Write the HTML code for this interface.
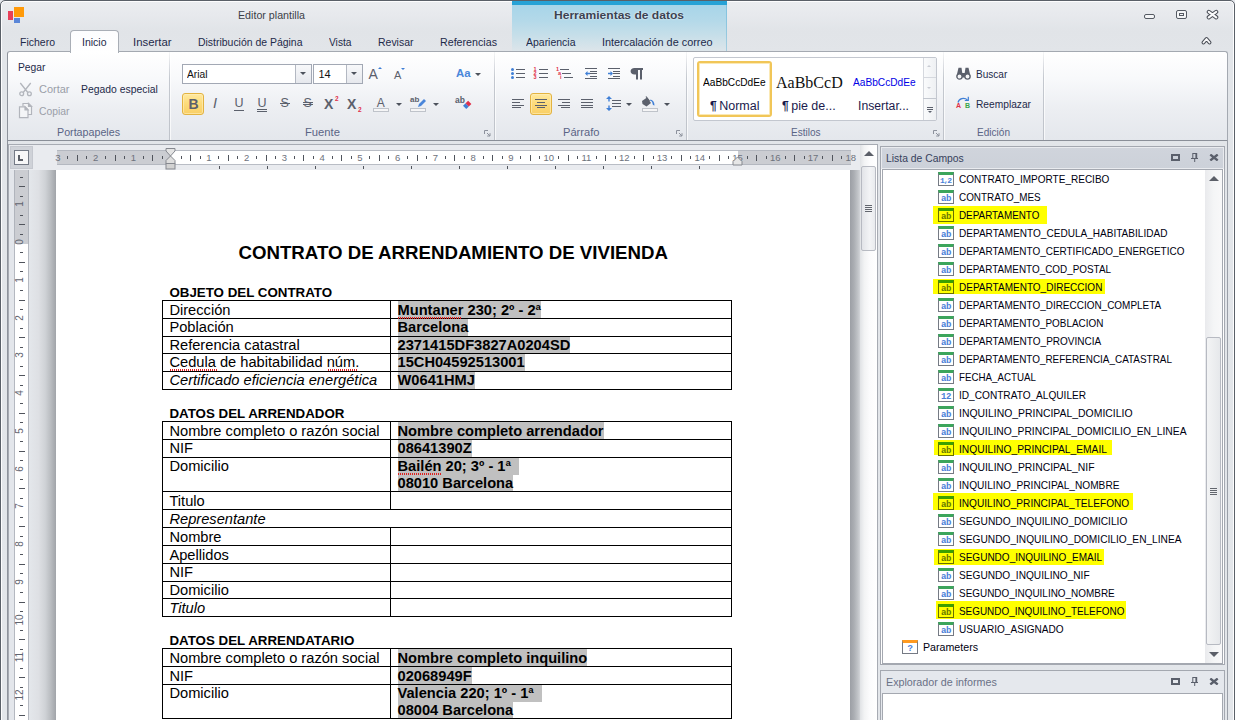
<!DOCTYPE html>
<html><head><meta charset="utf-8">
<style>
*{box-sizing:border-box;margin:0;padding:0}
html,body{width:1235px;height:720px;overflow:hidden}
body{position:relative;font-family:"Liberation Sans",sans-serif;font-size:11px;color:#1e2a4a;background:#e4e7ec}
.a{position:absolute}
.t{position:absolute;white-space:nowrap;line-height:14px;height:14px;transform-origin:0 50%}
#win{left:0;top:0;width:1235px;height:730px;background:linear-gradient(#ebedf0 0,#e7e9ed 14px,#e1e4e8 30px,#e2e5e9 52px,#e3e6ea 100%);border:1px solid #5a6068;border-radius:5px 5px 0 0;box-shadow:inset 0 0 0 1px #fdfdfe}
/* ribbon */
#ribbon{left:7px;top:51px;width:1221px;height:90px;background:linear-gradient(#ffffff 0,#f8f9fb 30%,#eceef2 65%,#e4e7ec 100%);border:1px solid #a4a9b1;border-left-color:#8e939c;border-bottom:1px solid #8a8f98;border-radius:3px 3px 0 0}
.gsep{position:absolute;top:52px;width:1px;height:88px;background:linear-gradient(rgba(192,196,203,.15),#c4c8cf 30%,#bfc3ca 100%);box-shadow:1px 0 0 rgba(255,255,255,.7)}
.glab{position:absolute;top:125px;height:14px;line-height:14px;color:#5a6485;text-align:center;white-space:nowrap}
.dis{color:#9a9ea8}

.ic{position:absolute;white-space:nowrap;color:#5b606c;font-weight:bold;line-height:1;transform-origin:0 50%}
.arr{position:absolute;width:0;height:0;border-left:3px solid transparent;border-right:3px solid transparent;border-top:3px solid #4d525c}
.combo{position:absolute;height:20px;background:#fff;border:1px solid #a2a8b4}
.cbtn{position:absolute;top:0;right:0;width:16px;height:18px;border-left:1px solid #b3b8c2;background:linear-gradient(#f7f8fa,#e6e8ed)}
.sel{position:absolute;border:1px solid #e3b341;border-radius:3px;background:linear-gradient(#ffe9a0 0,#fddc7c 45%,#f9cf66 100%);box-shadow:inset 0 0 0 1px rgba(255,240,190,.6)}

.fi{position:absolute;left:938px;width:16px;height:14px;border:1px solid #757a84;border-top:3px solid #3ca55c;background:#fff;color:#4a80d8;font-family:"Liberation Mono",monospace;font-weight:bold;font-size:9px;line-height:10px;padding-top:1px;text-align:center;letter-spacing:-0.500px;overflow:hidden}
.fi.y{background:#ffff00;color:#667800;border-color:#6a7000;border-top-color:#3ca000}
.tr{position:absolute;left:958.500px;white-space:nowrap;line-height:14px;height:14px;color:#000010;transform-origin:0 50%}
.yh{position:absolute;background:#ffff00}
/* doc */

#docbg{left:8px;top:144px;width:870px;height:576px;background:#e3e6eb;border:1px solid #a7abb3;border-bottom:none}
.rn{position:absolute;top:150.500px;width:20px;text-align:center;font-size:9.500px;line-height:14px;color:#6d727c}
.tk{position:absolute;width:1px;background:#50545c}
.dt{position:absolute;white-space:nowrap;color:#000;font-size:14.670px;line-height:17px;height:17px}
.dt b{background:#c0c0c0;padding:1px 0}
.hl{position:absolute;background:#000}
.sq{position:absolute;height:2px;background:repeating-linear-gradient(90deg,#e02020 0,#e02020 1px,transparent 1px,transparent 2px)}

</style></head><body>
<div id="win" class="a"></div>

<!-- TITLE BAR -->
<div class="a" style="left:8px;top:11px;width:5px;height:9px;background:#e8405a"></div>
<div class="a" style="left:14px;top:7px;width:10px;height:10px;background:#ff9a0a"></div>
<div class="a" style="left:14px;top:18px;width:6px;height:5px;background:#5a86d8"></div>
<div class="t" style="transform:scaleX(0.9697);left:238px;top:8px;font-size:11px;color:#3c3f48">Editor plantilla</div>
<!-- contextual tab header -->
<div class="a" style="left:512px;top:1px;width:215px;height:50px;background:linear-gradient(#a4d4e9 0,#b4d9e9 40%,#c7dfe9 70%,#dde5ea 100%);border-right:1px solid rgba(60,160,205,.35)"></div>
<div class="a" style="left:512px;top:1px;width:215px;height:4px;background:#27a2d6"></div>
<div class="t" style="transform:scaleX(1.0960);left:554px;top:8px;font-weight:bold;color:#3b4252;text-shadow:0 0 2px #fff">Herramientas de datos</div>
<!-- window buttons -->
<div class="a" style="left:1144px;top:14px;width:11px;height:5px;border:1.5px solid #555a63;border-radius:2px;background:#f4f5f7"></div>
<div class="a" style="left:1176px;top:10px;width:11px;height:9px;border:1.5px solid #555a63;border-radius:2px;background:#f4f5f7"></div>
<div class="a" style="left:1179px;top:13px;width:5px;height:3px;border:1px solid #555a63"></div>
<svg class="a" style="left:1206px;top:9px" width="13" height="11" viewBox="0 0 13 11" fill="none" stroke-linecap="round" stroke-linejoin="round"><path d="M2.800 2.900L10.200 8.300M10.200 2.900L2.800 8.300" stroke="#4a4e57" stroke-width="4.200"/><path d="M2.800 2.900L10.200 8.300M10.200 2.900L2.800 8.300" stroke="#fafafb" stroke-width="2.200"/></svg>
<svg class="a" style="left:1201px;top:36px" width="11" height="9" viewBox="0 0 11 9" fill="none" stroke-linecap="round" stroke-linejoin="round"><path d="M2.500 6.500L5.500 3 8.500 6.500" stroke="#4a4e57" stroke-width="3.800"/><path d="M2.500 6.500L5.500 3 8.500 6.500" stroke="#fafafb" stroke-width="1.800"/></svg>
<!-- TABS -->
<div class="a" style="left:70px;top:30px;width:49px;height:23px;background:linear-gradient(#fdfdfe,#ffffff);border:1px solid #a9aeb6;border-bottom:none;border-radius:4px 4px 0 0;z-index:3"></div>
<div class="t" style="transform:scaleX(0.9540);left:20px;top:35px;z-index:4">Fichero</div>
<div class="t" style="transform:scaleX(0.9538);left:81.500px;top:35px;z-index:4">Inicio</div>
<div class="t" style="transform:scaleX(1.0323);left:132.500px;top:35px;z-index:4">Insertar</div>
<div class="t" style="transform:scaleX(0.9493);left:197.500px;top:35px;z-index:4">Distribución de Página</div>
<div class="t" style="transform:scaleX(0.9272);left:328.700px;top:35px;z-index:4">Vista</div>
<div class="t" style="transform:scaleX(0.9518);left:377.500px;top:35px;z-index:4">Revisar</div>
<div class="t" style="transform:scaleX(0.9710);left:439.500px;top:35px;z-index:4">Referencias</div>
<div class="t" style="transform:scaleX(0.9522);left:525.800px;top:35px;z-index:4">Apariencia</div>
<div class="t" style="transform:scaleX(0.9874);left:601.600px;top:35px;z-index:4">Intercalación de correo</div>

<!-- RIBBON -->
<div id="ribbon" class="a"></div>
<div class="a" style="left:7px;top:141px;width:1px;height:580px;background:#8e939c"></div>
<!-- Portapapeles -->
<div class="t" style="transform:scaleX(0.9367);left:17.500px;top:60px">Pegar</div>
<svg class="a" style="left:18px;top:82px" width="15" height="15" viewBox="0 0 15 15" fill="none" stroke="#b2b5bc" stroke-width="1.300"><path d="M2.300 1L9.800 10.500M12.700 1L5.200 10.500"/><circle cx="3.700" cy="11.700" r="1.900"/><circle cx="11.400" cy="11.700" r="1.900"/></svg>
<div class="t dis" style="transform:scaleX(0.9980);left:38.700px;top:82px">Cortar</div>
<div class="t" style="transform:scaleX(0.9441);left:80.700px;top:82px">Pegado especial</div>
<svg class="a" style="left:18px;top:102px" width="15" height="17" viewBox="0 0 15 17" fill="#f4f5f7" stroke="#b2b5bc" stroke-width="1.200"><path d="M5 4.500V1.500H10.500L13.500 4.500V12.500H10"/><path d="M10.500 1.500V4.500H13.500Z" fill="#b2b5bc"/><path d="M1.500 4.800H7L10 7.800V15.700H1.500Z"/><path d="M7 4.800V7.800H10Z" fill="#b2b5bc"/></svg>
<div class="t dis" style="transform:scaleX(0.9412);left:38.700px;top:104px">Copiar</div>
<div class="t" style="transform:scaleX(0.9718);left:56.500px;top:125px;color:#5a6485">Portapapeles</div>
<div class="gsep" style="left:169px"></div>
<!-- Fuente -->
<div class="combo" style="left:182px;top:64px;width:130px"><div class="cbtn"></div></div>
<div class="arr" style="left:300px;top:72px"></div>
<div class="t" style="transform:scaleX(0.9312);left:187px;top:67px;color:#111">Arial</div>
<div class="combo" style="left:313px;top:64px;width:50px"><div class="cbtn"></div></div>
<div class="arr" style="left:351px;top:72px"></div>
<div class="t" style="left:318.500px;top:67px;color:#111">14</div>
<div class="ic" style="left:368.500px;top:67px;font-size:14px;font-weight:normal">A</div>
<div class="a" style="left:378px;top:67px;width:0;height:0;border-left:2.500px solid transparent;border-right:2.500px solid transparent;border-bottom:2.500px solid #3f7fd6"></div>
<div class="ic" style="left:394px;top:70px;font-size:11px;font-weight:normal">A</div>
<div class="a" style="left:400.500px;top:67.500px;width:0;height:0;border-left:2.500px solid transparent;border-right:2.500px solid transparent;border-top:2.500px solid #3f7fd6"></div>
<div class="ic" style="transform:scaleX(0.9862);left:456px;top:68px;font-size:11.500px;color:#4a86da">Aa</div>
<div class="arr" style="left:474.500px;top:73px"></div>
<div class="sel" style="left:182px;top:93px;width:22px;height:22px"></div>
<div class="ic" style="left:188.500px;top:96.500px;font-size:14px">B</div>
<div class="ic" style="left:213px;top:96px;font-size:14.500px;font-style:italic;font-weight:normal">I</div>
<div class="ic" style="left:234.500px;top:97px;font-size:12.500px;font-weight:normal">U</div>
<div class="a" style="left:234px;top:110px;width:10px;height:1px;background:#5b606c"></div>
<div class="ic" style="left:257.500px;top:97px;font-size:12.500px;font-weight:normal">U</div>
<div class="a" style="left:257px;top:109px;width:10px;height:3px;border-top:1px solid #5b606c;border-bottom:1px solid #5b606c"></div>
<div class="ic" style="left:280.500px;top:97px;font-size:12.500px;font-weight:normal">S</div>
<div class="a" style="left:279.500px;top:103px;width:10px;height:1px;background:#5b606c"></div>
<div class="ic" style="left:303.500px;top:97px;font-size:12.500px;font-weight:normal">S</div>
<div class="a" style="left:302.500px;top:102px;width:10px;height:3px;border-top:1px solid #5b606c;border-bottom:1px solid #5b606c"></div>
<div class="ic" style="left:324px;top:96.500px;font-size:14px">X</div>
<div class="ic" style="left:335px;top:96px;font-size:6.500px;color:#e0304a">2</div>
<div class="ic" style="left:347px;top:96.500px;font-size:14px">X</div>
<div class="ic" style="left:358px;top:106.500px;font-size:6.500px;color:#e0304a">2</div>
<div class="ic" style="left:376.800px;top:96.500px;font-size:12px;font-weight:normal">A</div>
<div class="a" style="left:373px;top:108px;width:16px;height:4px;border:1px solid #bfc3ca;background:#f5f5f6"></div>
<div class="arr" style="left:395.500px;top:103px"></div>
<div class="ic" style="left:410px;top:95.500px;font-size:8px">ab</div>
<svg class="a" style="left:417px;top:98px" width="10" height="10" viewBox="0 0 10 10"><path d="M1 9L2 6 7 1 9 3 4 8Z" fill="#4a86da"/></svg>
<div class="a" style="left:410px;top:108px;width:16px;height:4px;border:1px solid #bfc3ca;background:#f5f5f6"></div>
<div class="arr" style="left:432.500px;top:103px"></div>
<div class="ic" style="left:455px;top:96px;font-size:8.500px">ab</div>
<svg class="a" style="left:461px;top:99px" width="12" height="12" viewBox="0 0 12 12"><g transform="translate(6.200 5.800) rotate(-45)"><rect x="-3.600" y="-2.300" width="3.600" height="4.600" fill="#3f7fd6"/><rect x="0" y="-2.300" width="3.600" height="4.600" fill="#e0304a"/></g></svg>
<div class="t" style="transform:scaleX(1.0219);left:305px;top:125px;color:#5a6485">Fuente</div>
<svg class="a" style="left:483.500px;top:130px" width="7" height="7" viewBox="0 0 7 7" fill="none" stroke="#8c919c" stroke-width="1"><path d="M0.500 4V0.500H4"/><path d="M3 3L6 6M6 3.200V6H3.200"/></svg>
<div class="gsep" style="left:494px"></div>

<!-- Parrafo -->
<div class="a" style="left:510.500px;top:68px;width:3px;height:3px;border-radius:50%;background:#3f7fd6"></div>
<div class="a" style="left:516px;top:69px;width:9px;height:1px;background:#5b606c"></div>
<div class="a" style="left:510.500px;top:72px;width:3px;height:3px;border-radius:50%;background:#3f7fd6"></div>
<div class="a" style="left:516px;top:73px;width:9px;height:1px;background:#5b606c"></div>
<div class="a" style="left:510.500px;top:76px;width:3px;height:3px;border-radius:50%;background:#3f7fd6"></div>
<div class="a" style="left:516px;top:77px;width:9px;height:1px;background:#5b606c"></div>
<div class="ic" style="left:533.500px;top:66.5px;font-size:5.500px;color:#e0304a">1</div>
<div class="a" style="left:539px;top:69px;width:9px;height:1px;background:#5b606c"></div>
<div class="ic" style="left:533.500px;top:70.5px;font-size:5.500px;color:#e0304a">2</div>
<div class="a" style="left:539px;top:73px;width:9px;height:1px;background:#5b606c"></div>
<div class="ic" style="left:533.500px;top:74.5px;font-size:5.500px;color:#e0304a">3</div>
<div class="a" style="left:539px;top:77px;width:9px;height:1px;background:#5b606c"></div>
<div class="ic" style="left:556px;top:66.5px;font-size:5.500px;color:#e0304a">1</div>
<div class="a" style="left:559.5px;top:69px;width:9px;height:1px;background:#5b606c"></div>
<div class="ic" style="left:558px;top:70.5px;font-size:5.500px;color:#e0304a">a</div>
<div class="a" style="left:561.5px;top:73px;width:9px;height:1px;background:#5b606c"></div>
<div class="ic" style="left:560px;top:74.5px;font-size:5.500px;color:#e0304a">i</div>
<div class="a" style="left:563.5px;top:77px;width:9px;height:1px;background:#5b606c"></div>
<div class="a" style="left:585px;top:68.0px;width:12px;height:1px;background:#5b606c"></div>
<div class="a" style="left:590px;top:70.5px;width:7px;height:1px;background:#5b606c"></div>
<div class="a" style="left:590px;top:73.0px;width:7px;height:1px;background:#5b606c"></div>
<div class="a" style="left:590px;top:75.5px;width:7px;height:1px;background:#5b606c"></div>
<div class="a" style="left:585px;top:78.0px;width:12px;height:1px;background:#5b606c"></div>
<svg class="a" style="left:585px;top:70.500px" width="5" height="5" viewBox="0 0 5 5"><path d="M0 2.500L2.500 0V1.800H5V3.200H2.500V5Z" fill="#3f7fd6"/></svg>
<div class="a" style="left:607.5px;top:68.0px;width:12px;height:1px;background:#5b606c"></div>
<div class="a" style="left:612.5px;top:70.5px;width:7px;height:1px;background:#5b606c"></div>
<div class="a" style="left:612.5px;top:73.0px;width:7px;height:1px;background:#5b606c"></div>
<div class="a" style="left:612.5px;top:75.5px;width:7px;height:1px;background:#5b606c"></div>
<div class="a" style="left:607.5px;top:78.0px;width:12px;height:1px;background:#5b606c"></div>
<svg class="a" style="left:607.5px;top:70.500px" width="5" height="5" viewBox="0 0 5 5"><path d="M5 2.500L2.500 0V1.800H0V3.200H2.500V5Z" fill="#3f7fd6"/></svg>
<svg class="a" style="left:630px;top:68px" width="14" height="12" viewBox="0 0 14 12"><path d="M4.500 0H13V2H12V11.500H10V2H8V11.500H6V6.500H4.500C2 6.500 0.600 5 0.600 3.250C0.600 1.500 2 0 4.500 0Z" fill="#5b606c"/></svg>
<div class="a" style="left:512.0px;top:99.0px;width:12px;height:1px;background:#5b606c"></div>
<div class="a" style="left:512.0px;top:101.8px;width:8px;height:1px;background:#5b606c"></div>
<div class="a" style="left:512.0px;top:104.5px;width:12px;height:1px;background:#5b606c"></div>
<div class="a" style="left:512.0px;top:107.2px;width:9px;height:1px;background:#5b606c"></div>
<div class="sel" style="left:530px;top:93px;width:22px;height:22px"></div>
<div class="a" style="left:535.0px;top:99.0px;width:12px;height:1px;background:#5b606c"></div>
<div class="a" style="left:537.0px;top:101.8px;width:8px;height:1px;background:#5b606c"></div>
<div class="a" style="left:535.0px;top:104.5px;width:12px;height:1px;background:#5b606c"></div>
<div class="a" style="left:537.0px;top:107.2px;width:8px;height:1px;background:#5b606c"></div>
<div class="a" style="left:558.0px;top:99.0px;width:12px;height:1px;background:#5b606c"></div>
<div class="a" style="left:562.0px;top:101.8px;width:8px;height:1px;background:#5b606c"></div>
<div class="a" style="left:558.0px;top:104.5px;width:12px;height:1px;background:#5b606c"></div>
<div class="a" style="left:561.0px;top:107.2px;width:9px;height:1px;background:#5b606c"></div>
<div class="a" style="left:581.0px;top:99.0px;width:12px;height:1px;background:#5b606c"></div>
<div class="a" style="left:581.0px;top:101.8px;width:12px;height:1px;background:#5b606c"></div>
<div class="a" style="left:581.0px;top:104.5px;width:12px;height:1px;background:#5b606c"></div>
<div class="a" style="left:581.0px;top:107.2px;width:12px;height:1px;background:#5b606c"></div>
<svg class="a" style="left:605.500px;top:96px" width="6" height="15" viewBox="0 0 6 15"><path d="M3 0L6 3H3.700V5.500H2.300V3H0Z M3 15L6 12H3.700V9.500H2.300V12H0Z" fill="#3f7fd6"/></svg>
<div class="a" style="left:612.0px;top:99.5px;width:9px;height:1px;background:#5b606c"></div>
<div class="a" style="left:612.0px;top:102.9px;width:9px;height:1px;background:#5b606c"></div>
<div class="a" style="left:612.0px;top:106.3px;width:9px;height:1px;background:#5b606c"></div>
<div class="arr" style="left:625.500px;top:103px"></div>
<svg class="a" style="left:641px;top:96px" width="17" height="12" viewBox="0 0 17 12"><path d="M1 5L6 1.500 10 7 5.500 10.500 1.500 8Z" fill="#5b606c"/><path d="M5 0.500L8.500 5" stroke="#5b606c" stroke-width="1.200" fill="none"/><path d="M9.500 3.500C12 4 13.500 6 13.500 9.500C12.500 9.500 11.500 8.500 11.500 7.500C11.500 6 10.500 5 9 4.800Z" fill="#3f7fd6"/></svg>
<div class="a" style="left:641.500px;top:108px;width:16px;height:4px;border:1px solid #bfc3ca;background:#f5f5f6"></div>
<div class="arr" style="left:663.500px;top:103px"></div>
<div class="t" style="transform:scaleX(1.0117);left:563px;top:125px;color:#5a6485">Párrafo</div>
<svg class="a" style="left:675.500px;top:130px" width="7" height="7" viewBox="0 0 7 7" fill="none" stroke="#8c919c" stroke-width="1"><path d="M0.500 4V0.500H4"/><path d="M3 3L6 6M6 3.200V6H3.200"/></svg>
<div class="gsep" style="left:686px"></div>
<!-- Estilos -->
<div class="a" style="left:693px;top:57px;width:244px;height:64px;background:#fff;border:1px solid #c3c7cf;border-radius:2px"></div>
<div class="a" style="left:923px;top:58px;width:13px;height:62px;border-left:1px solid #d5d8de;background:linear-gradient(90deg,#fafbfc,#eef0f3)"></div>
<div class="a" style="left:923px;top:77px;width:13px;height:1px;background:#d5d8de"></div>
<div class="a" style="left:923px;top:98px;width:13px;height:1px;background:#c3c7cf"></div>
<div class="a" style="left:927px;top:65px;width:0;height:0;border-left:2.500px solid transparent;border-right:2.500px solid transparent;border-bottom:2.500px solid #c9ccd3"></div>
<div class="a" style="left:927px;top:87px;width:0;height:0;border-left:2.500px solid transparent;border-right:2.500px solid transparent;border-top:2.500px solid #c9ccd3"></div>
<div class="a" style="left:927px;top:106.500px;width:6px;height:1px;background:#5b606c"></div>
<div class="a" style="left:927px;top:108.500px;width:6px;height:1px;background:#5b606c"></div>
<div class="a" style="left:927.500px;top:110.500px;width:0;height:0;border-left:2.500px solid transparent;border-right:2.500px solid transparent;border-top:2.500px solid #5b606c"></div>
<div class="a" style="left:697px;top:61px;width:75px;height:56px;border:2px solid #f1c658;border-radius:3px;background:#fff;box-shadow:inset 0 0 0 1px #fbe9b4"></div>
<div class="t" style="transform:scaleX(0.9223);left:702.800px;top:75.400px;color:#000">AaBbCcDdEe</div>
<div class="t" style="transform:scaleX(1.0003);left:710px;top:97.500px;font-size:12.500px;line-height:16px;height:16px;color:#1b1b4d"><b style="font-size:12px">¶</b>&#8201;Normal</div>
<div class="t" style="transform:scaleX(0.9149);left:775.700px;top:72px;font-family:'Liberation Serif',serif;font-size:17.500px;line-height:20px;height:20px;color:#111">AaBbCcD</div>
<div class="t" style="transform:scaleX(1.0005);left:782px;top:97.500px;font-size:12.500px;line-height:16px;height:16px;color:#1b1b4d"><b style="font-size:12px">¶</b>&#8201;pie de...</div>
<div class="t" style="transform:scaleX(0.9223);left:853px;top:75.400px;color:#0000e6">AaBbCcDdEe</div>
<div class="t" style="transform:scaleX(0.9787);left:858.300px;top:97.500px;font-size:12.500px;line-height:16px;height:16px;color:#1b1b4d">Insertar...</div>
<div class="t" style="transform:scaleX(0.9103);left:790.500px;top:125px;color:#5a6485">Estilos</div>
<svg class="a" style="left:933px;top:130px" width="7" height="7" viewBox="0 0 7 7" fill="none" stroke="#8c919c" stroke-width="1"><path d="M0.500 4V0.500H4"/><path d="M3 3L6 6M6 3.200V6H3.200"/></svg>
<div class="gsep" style="left:943px"></div>
<!-- Edicion -->
<svg class="a" style="left:956px;top:67px" width="15" height="13" viewBox="0 0 15 13"><path d="M2.500 0.800H5.500L6.300 6H8.700L9.500 0.800H12.500L14.300 8.500V10.500H0.700V8.500Z" fill="#5b606c"/><circle cx="3.500" cy="9.500" r="2.600" fill="#f4f5f7" stroke="#5b606c" stroke-width="1.300"/><circle cx="11.500" cy="9.500" r="2.600" fill="#f4f5f7" stroke="#5b606c" stroke-width="1.300"/></svg>
<div class="t" style="transform:scaleX(0.9139);left:975.700px;top:66.500px">Buscar</div>
<div class="ic" style="left:956px;top:102px;font-size:7px;color:#e0304a">A</div>
<div class="ic" style="left:965px;top:102px;font-size:7px;color:#3aa54a">B</div>
<svg class="a" style="left:957px;top:96px" width="13" height="7" viewBox="0 0 13 7" fill="none" stroke="#3f7fd6" stroke-width="1.200"><path d="M1 6.500C2 2.500 7 1 10.500 4"/><path d="M11.300 0.800V4.500H7.800" /></svg>
<div class="t" style="transform:scaleX(0.9273);left:975.700px;top:96.700px">Reemplazar</div>
<div class="t" style="transform:scaleX(0.9147);left:977.400px;top:125px;color:#5a6485">Edición</div>
<div class="gsep" style="left:1043px"></div>

<!-- DOC AREA -->
<div id="docbg" class="a"></div>
<div class="a" style="left:9px;top:145px;width:868px;height:25px;background:#e9ebef"></div>
<div class="a" style="left:29px;top:170px;width:27px;height:550px;background:linear-gradient(90deg,#e4e7eb 0,#dee0e4 35%,#cfd2d6 60%,#babdc1 80%,#a1a4a9 100%)"></div>
<div class="a" style="left:56px;top:170px;width:794px;height:550px;background:#fff"></div>
<div class="a" style="left:850px;top:170px;width:10px;height:550px;background:linear-gradient(90deg,#9c9fa5 0,#abaeb3 40%,#c2c5c9 80%,#d2d4d8 100%)"></div>
<div class="a" style="left:10px;top:146px;width:23px;height:23px;background:#cfd2d8;border:1px solid #c5c8cf"></div>
<div class="a" style="left:14px;top:150px;width:15px;height:15px;background:#f7f7f8;border:1px solid #747a86"></div>
<div class="a" style="left:18px;top:155px;width:2px;height:6px;background:#5b5f68"></div><div class="a" style="left:18px;top:159px;width:5px;height:2px;background:#5b5f68"></div>
<div class="a" style="left:57px;top:150px;width:794px;height:15px;background:#fff;border-top:1px solid #b9bdc5;border-bottom:1px solid #b9bdc5"></div>
<div class="a" style="left:57px;top:150px;width:113.500px;height:15px;background:#cbcdd2;border-top:1px solid #b4b8c0;border-bottom:1px solid #b4b8c0"></div>
<div class="a" style="left:737.500px;top:150px;width:113.500px;height:15px;background:#cbcdd2;border-top:1px solid #b4b8c0;border-bottom:1px solid #b4b8c0"></div>
<div class="rn" style="left:47.95px">3</div>
<div class="tk" style="left:67px;top:156px;height:3px"></div>
<div class="tk" style="left:77px;top:155px;height:6px"></div>
<div class="tk" style="left:86px;top:156px;height:3px"></div>
<div class="rn" style="left:85.70px">2</div>
<div class="tk" style="left:105px;top:156px;height:3px"></div>
<div class="tk" style="left:115px;top:155px;height:6px"></div>
<div class="tk" style="left:124px;top:156px;height:3px"></div>
<div class="rn" style="left:123.45px">1</div>
<div class="tk" style="left:143px;top:156px;height:3px"></div>
<div class="tk" style="left:152px;top:155px;height:6px"></div>
<div class="tk" style="left:162px;top:156px;height:3px"></div>
<div class="tk" style="left:181px;top:156px;height:3px"></div>
<div class="tk" style="left:190px;top:155px;height:6px"></div>
<div class="tk" style="left:200px;top:156px;height:3px"></div>
<div class="rn" style="left:198.95px">1</div>
<div class="tk" style="left:218px;top:156px;height:3px"></div>
<div class="tk" style="left:228px;top:155px;height:6px"></div>
<div class="tk" style="left:237px;top:156px;height:3px"></div>
<div class="rn" style="left:236.70px">2</div>
<div class="tk" style="left:256px;top:156px;height:3px"></div>
<div class="tk" style="left:266px;top:155px;height:6px"></div>
<div class="tk" style="left:275px;top:156px;height:3px"></div>
<div class="rn" style="left:274.45px">3</div>
<div class="tk" style="left:294px;top:156px;height:3px"></div>
<div class="tk" style="left:303px;top:155px;height:6px"></div>
<div class="tk" style="left:313px;top:156px;height:3px"></div>
<div class="rn" style="left:312.20px">4</div>
<div class="tk" style="left:332px;top:156px;height:3px"></div>
<div class="tk" style="left:341px;top:155px;height:6px"></div>
<div class="tk" style="left:351px;top:156px;height:3px"></div>
<div class="rn" style="left:349.95px">5</div>
<div class="tk" style="left:369px;top:156px;height:3px"></div>
<div class="tk" style="left:379px;top:155px;height:6px"></div>
<div class="tk" style="left:388px;top:156px;height:3px"></div>
<div class="rn" style="left:387.70px">6</div>
<div class="tk" style="left:407px;top:156px;height:3px"></div>
<div class="tk" style="left:417px;top:155px;height:6px"></div>
<div class="tk" style="left:426px;top:156px;height:3px"></div>
<div class="rn" style="left:425.45px">7</div>
<div class="tk" style="left:445px;top:156px;height:3px"></div>
<div class="tk" style="left:454px;top:155px;height:6px"></div>
<div class="tk" style="left:464px;top:156px;height:3px"></div>
<div class="rn" style="left:463.20px">8</div>
<div class="tk" style="left:483px;top:156px;height:3px"></div>
<div class="tk" style="left:492px;top:155px;height:6px"></div>
<div class="tk" style="left:502px;top:156px;height:3px"></div>
<div class="rn" style="left:500.95px">9</div>
<div class="tk" style="left:520px;top:156px;height:3px"></div>
<div class="tk" style="left:530px;top:155px;height:6px"></div>
<div class="tk" style="left:539px;top:156px;height:3px"></div>
<div class="rn" style="left:538.70px">10</div>
<div class="tk" style="left:558px;top:156px;height:3px"></div>
<div class="tk" style="left:568px;top:155px;height:6px"></div>
<div class="tk" style="left:577px;top:156px;height:3px"></div>
<div class="rn" style="left:576.45px">11</div>
<div class="tk" style="left:596px;top:156px;height:3px"></div>
<div class="tk" style="left:605px;top:155px;height:6px"></div>
<div class="tk" style="left:615px;top:156px;height:3px"></div>
<div class="rn" style="left:614.20px">12</div>
<div class="tk" style="left:634px;top:156px;height:3px"></div>
<div class="tk" style="left:643px;top:155px;height:6px"></div>
<div class="tk" style="left:653px;top:156px;height:3px"></div>
<div class="rn" style="left:651.95px">13</div>
<div class="tk" style="left:671px;top:156px;height:3px"></div>
<div class="tk" style="left:681px;top:155px;height:6px"></div>
<div class="tk" style="left:690px;top:156px;height:3px"></div>
<div class="rn" style="left:689.70px">14</div>
<div class="tk" style="left:709px;top:156px;height:3px"></div>
<div class="tk" style="left:719px;top:155px;height:6px"></div>
<div class="tk" style="left:728px;top:156px;height:3px"></div>
<div class="rn" style="left:727.45px">15</div>
<div class="tk" style="left:747px;top:156px;height:3px"></div>
<div class="tk" style="left:756px;top:155px;height:6px"></div>
<div class="tk" style="left:766px;top:156px;height:3px"></div>
<div class="rn" style="left:765.20px">16</div>
<div class="tk" style="left:785px;top:156px;height:3px"></div>
<div class="tk" style="left:794px;top:155px;height:6px"></div>
<div class="tk" style="left:804px;top:156px;height:3px"></div>
<div class="rn" style="left:802.95px">17</div>
<div class="tk" style="left:822px;top:156px;height:3px"></div>
<div class="tk" style="left:832px;top:155px;height:6px"></div>
<div class="tk" style="left:841px;top:156px;height:3px"></div>
<div class="rn" style="left:840.70px">18</div>
<div class="tk" style="left:219px;top:166px;height:3px"></div>
<div class="tk" style="left:267px;top:166px;height:3px"></div>
<div class="tk" style="left:315px;top:166px;height:3px"></div>
<div class="tk" style="left:363px;top:166px;height:3px"></div>
<div class="tk" style="left:411px;top:166px;height:3px"></div>
<div class="tk" style="left:459px;top:166px;height:3px"></div>
<div class="tk" style="left:507px;top:166px;height:3px"></div>
<div class="tk" style="left:555px;top:166px;height:3px"></div>
<div class="tk" style="left:603px;top:166px;height:3px"></div>
<div class="tk" style="left:651px;top:166px;height:3px"></div>
<div class="tk" style="left:699px;top:166px;height:3px"></div>
<svg class="a" style="left:165px;top:147px" width="11" height="23" viewBox="0 0 11 23"><path d="M1 1.500H10V4L5.500 9 1 4Z" fill="#e4e4e4" stroke="#85888f"/><path d="M5.500 9L10 13.500V16.500H1V13.500Z" fill="#dedede" stroke="#85888f"/><rect x="1" y="16.500" width="9" height="5.500" fill="#d2d2d2" stroke="#85888f"/></svg>
<svg class="a" style="left:732px;top:156px" width="11" height="10" viewBox="0 0 11 10"><path d="M5.500 1L10 5.500V9H1V5.500Z" fill="#e6e6e6" stroke="#85888f"/></svg>
<div class="a" style="left:14px;top:170px;width:15px;height:550px;background:#fff;border-left:1px solid #b4b8c0;border-right:1px solid #b4b8c0"></div>
<div class="a" style="left:14px;top:170px;width:15px;height:74px;background:#cbcdd2;border-left:1px solid #b0b4bc;border-right:1px solid #b0b4bc"></div>
<div class="a" style="left:20px;top:177px;width:3px;height:1px;background:#50545c"></div>
<div class="a" style="left:19px;top:186px;width:6px;height:1px;background:#50545c"></div>
<div class="a" style="left:20px;top:196px;width:3px;height:1px;background:#50545c"></div>
<div class="a" style="left:9.500px;top:197.2px;width:20px;height:14px;line-height:14px;text-align:center;font-size:10px;color:#5f646f;transform:rotate(-90deg)">1</div>
<div class="a" style="left:20px;top:215px;width:3px;height:1px;background:#50545c"></div>
<div class="a" style="left:19px;top:224px;width:6px;height:1px;background:#50545c"></div>
<div class="a" style="left:20px;top:234px;width:3px;height:1px;background:#50545c"></div>
<div class="a" style="left:9.500px;top:235.0px;width:20px;height:14px;line-height:14px;text-align:center;font-size:10px;color:#5f646f;transform:rotate(-90deg)">0</div>
<div class="a" style="left:20px;top:252px;width:3px;height:1px;background:#50545c"></div>
<div class="a" style="left:19px;top:262px;width:6px;height:1px;background:#50545c"></div>
<div class="a" style="left:20px;top:271px;width:3px;height:1px;background:#50545c"></div>
<div class="a" style="left:9.500px;top:272.8px;width:20px;height:14px;line-height:14px;text-align:center;font-size:10px;color:#5f646f;transform:rotate(-90deg)">1</div>
<div class="a" style="left:20px;top:290px;width:3px;height:1px;background:#50545c"></div>
<div class="a" style="left:19px;top:300px;width:6px;height:1px;background:#50545c"></div>
<div class="a" style="left:20px;top:309px;width:3px;height:1px;background:#50545c"></div>
<div class="a" style="left:9.500px;top:310.5px;width:20px;height:14px;line-height:14px;text-align:center;font-size:10px;color:#5f646f;transform:rotate(-90deg)">2</div>
<div class="a" style="left:20px;top:328px;width:3px;height:1px;background:#50545c"></div>
<div class="a" style="left:19px;top:337px;width:6px;height:1px;background:#50545c"></div>
<div class="a" style="left:20px;top:347px;width:3px;height:1px;background:#50545c"></div>
<div class="a" style="left:9.500px;top:348.2px;width:20px;height:14px;line-height:14px;text-align:center;font-size:10px;color:#5f646f;transform:rotate(-90deg)">3</div>
<div class="a" style="left:20px;top:366px;width:3px;height:1px;background:#50545c"></div>
<div class="a" style="left:19px;top:375px;width:6px;height:1px;background:#50545c"></div>
<div class="a" style="left:20px;top:385px;width:3px;height:1px;background:#50545c"></div>
<div class="a" style="left:9.500px;top:386.0px;width:20px;height:14px;line-height:14px;text-align:center;font-size:10px;color:#5f646f;transform:rotate(-90deg)">4</div>
<div class="a" style="left:20px;top:403px;width:3px;height:1px;background:#50545c"></div>
<div class="a" style="left:19px;top:413px;width:6px;height:1px;background:#50545c"></div>
<div class="a" style="left:20px;top:422px;width:3px;height:1px;background:#50545c"></div>
<div class="a" style="left:9.500px;top:423.8px;width:20px;height:14px;line-height:14px;text-align:center;font-size:10px;color:#5f646f;transform:rotate(-90deg)">5</div>
<div class="a" style="left:20px;top:441px;width:3px;height:1px;background:#50545c"></div>
<div class="a" style="left:19px;top:451px;width:6px;height:1px;background:#50545c"></div>
<div class="a" style="left:20px;top:460px;width:3px;height:1px;background:#50545c"></div>
<div class="a" style="left:9.500px;top:461.5px;width:20px;height:14px;line-height:14px;text-align:center;font-size:10px;color:#5f646f;transform:rotate(-90deg)">6</div>
<div class="a" style="left:20px;top:479px;width:3px;height:1px;background:#50545c"></div>
<div class="a" style="left:19px;top:488px;width:6px;height:1px;background:#50545c"></div>
<div class="a" style="left:20px;top:498px;width:3px;height:1px;background:#50545c"></div>
<div class="a" style="left:9.500px;top:499.2px;width:20px;height:14px;line-height:14px;text-align:center;font-size:10px;color:#5f646f;transform:rotate(-90deg)">7</div>
<div class="a" style="left:20px;top:517px;width:3px;height:1px;background:#50545c"></div>
<div class="a" style="left:19px;top:526px;width:6px;height:1px;background:#50545c"></div>
<div class="a" style="left:20px;top:536px;width:3px;height:1px;background:#50545c"></div>
<div class="a" style="left:9.500px;top:537.0px;width:20px;height:14px;line-height:14px;text-align:center;font-size:10px;color:#5f646f;transform:rotate(-90deg)">8</div>
<div class="a" style="left:20px;top:554px;width:3px;height:1px;background:#50545c"></div>
<div class="a" style="left:19px;top:564px;width:6px;height:1px;background:#50545c"></div>
<div class="a" style="left:20px;top:573px;width:3px;height:1px;background:#50545c"></div>
<div class="a" style="left:9.500px;top:574.8px;width:20px;height:14px;line-height:14px;text-align:center;font-size:10px;color:#5f646f;transform:rotate(-90deg)">9</div>
<div class="a" style="left:20px;top:592px;width:3px;height:1px;background:#50545c"></div>
<div class="a" style="left:19px;top:602px;width:6px;height:1px;background:#50545c"></div>
<div class="a" style="left:20px;top:611px;width:3px;height:1px;background:#50545c"></div>
<div class="a" style="left:9.500px;top:612.5px;width:20px;height:14px;line-height:14px;text-align:center;font-size:10px;color:#5f646f;transform:rotate(-90deg)">10</div>
<div class="a" style="left:20px;top:630px;width:3px;height:1px;background:#50545c"></div>
<div class="a" style="left:19px;top:639px;width:6px;height:1px;background:#50545c"></div>
<div class="a" style="left:20px;top:649px;width:3px;height:1px;background:#50545c"></div>
<div class="a" style="left:9.500px;top:650.2px;width:20px;height:14px;line-height:14px;text-align:center;font-size:10px;color:#5f646f;transform:rotate(-90deg)">11</div>
<div class="a" style="left:20px;top:668px;width:3px;height:1px;background:#50545c"></div>
<div class="a" style="left:19px;top:677px;width:6px;height:1px;background:#50545c"></div>
<div class="a" style="left:20px;top:687px;width:3px;height:1px;background:#50545c"></div>
<div class="a" style="left:9.500px;top:688.0px;width:20px;height:14px;line-height:14px;text-align:center;font-size:10px;color:#5f646f;transform:rotate(-90deg)">12</div>
<div class="a" style="left:20px;top:705px;width:3px;height:1px;background:#50545c"></div>
<div class="a" style="left:19px;top:715px;width:6px;height:1px;background:#50545c"></div>
<div class="a" style="left:860px;top:145px;width:17px;height:575px;background:linear-gradient(90deg,#e0e2e5 0,#f2f3f4 25%,#fbfbfc 55%,#ffffff 100%)"></div>
<div class="a" style="left:863.500px;top:151px;width:0;height:0;border-left:5px solid transparent;border-right:5px solid transparent;border-bottom:5px solid #5b5f68"></div>
<div class="a" style="left:861px;top:166px;width:15px;height:85px;border:1px solid #b7bac2;border-radius:2px;background:linear-gradient(90deg,#e2e4e8,#f3f4f6 60%,#e9ebee)"></div>
<div class="a" style="left:865px;top:205px;width:7px;height:1px;background:#62666e"></div>
<div class="a" style="left:865px;top:207px;width:7px;height:1px;background:#62666e"></div>
<div class="a" style="left:865px;top:209px;width:7px;height:1px;background:#62666e"></div>
<div class="a" style="left:865px;top:211px;width:7px;height:1px;background:#62666e"></div>
<div class="dt" style="left:238.5px;top:241.53px;font-size:18.67px;line-height:22px;height:22px;font-weight:bold;">CONTRATO DE ARRENDAMIENTO DE VIVIENDA</div>
<div class="dt" style="left:169.4px;top:285.38px;font-size:13.33px;line-height:16px;height:16px;font-weight:bold;">OBJETO DEL CONTRATO</div>
<div class="dt" style="left:169.4px;top:302.42px;font-size:14.67px;line-height:17px;height:17px;">Dirección</div>
<div class="dt" style="left:397.5px;top:302.42px;font-size:14.67px;line-height:17px;height:17px;"><b>Muntaner 230; 2º - 2ª</b></div>
<div class="dt" style="left:169.4px;top:319.42px;font-size:14.67px;line-height:17px;height:17px;">Población</div>
<div class="dt" style="left:397.5px;top:319.42px;font-size:14.67px;line-height:17px;height:17px;"><b>Barcelona</b></div>
<div class="dt" style="left:169.4px;top:337.42px;font-size:14.67px;line-height:17px;height:17px;">Referencia catastral</div>
<div class="dt" style="left:397.5px;top:337.42px;font-size:14.67px;line-height:17px;height:17px;"><b>2371415DF3827A0204SD</b></div>
<div class="dt" style="left:169.4px;top:354.42px;font-size:14.67px;line-height:17px;height:17px;">Cedula de habitabilidad núm.</div>
<div class="dt" style="left:397.5px;top:354.42px;font-size:14.67px;line-height:17px;height:17px;"><b>15CH04592513001</b></div>
<div class="dt" style="left:169.4px;top:372.42px;font-size:14.67px;line-height:17px;height:17px;"><i>Certificado eficiencia energética</i></div>
<div class="dt" style="left:397.5px;top:372.42px;font-size:14.67px;line-height:17px;height:17px;"><b>W0641HMJ</b></div>
<div class="hl" style="left:162px;top:300px;width:570px;height:1px"></div>
<div class="hl" style="left:162px;top:318px;width:570px;height:1px"></div>
<div class="hl" style="left:162px;top:336px;width:570px;height:1px"></div>
<div class="hl" style="left:162px;top:353px;width:570px;height:1px"></div>
<div class="hl" style="left:162px;top:371px;width:570px;height:1px"></div>
<div class="hl" style="left:162px;top:389px;width:570px;height:1px"></div>
<div class="hl" style="left:162px;top:300px;width:1px;height:90px"></div>
<div class="hl" style="left:731px;top:300px;width:1px;height:90px"></div>
<div class="hl" style="left:390px;top:300px;width:1px;height:18px"></div>
<div class="hl" style="left:390px;top:318px;width:1px;height:18px"></div>
<div class="hl" style="left:390px;top:336px;width:1px;height:17px"></div>
<div class="hl" style="left:390px;top:353px;width:1px;height:18px"></div>
<div class="hl" style="left:390px;top:371px;width:1px;height:18px"></div>
<div class="dt" style="left:169.4px;top:406.38px;font-size:13.33px;line-height:16px;height:16px;font-weight:bold;">DATOS DEL ARRENDADOR</div>
<div class="dt" style="left:169.4px;top:423.42px;font-size:14.67px;line-height:17px;height:17px;">Nombre completo o razón social</div>
<div class="dt" style="left:397.5px;top:423.42px;font-size:14.67px;line-height:17px;height:17px;"><b>Nombre completo arrendador</b></div>
<div class="dt" style="left:169.4px;top:440.42px;font-size:14.67px;line-height:17px;height:17px;">NIF</div>
<div class="dt" style="left:397.5px;top:440.42px;font-size:14.67px;line-height:17px;height:17px;"><b>08641390Z</b></div>
<div class="dt" style="left:169.4px;top:458.42px;font-size:14.67px;line-height:17px;height:17px;">Domicilio</div>
<div class="dt" style="left:397.5px;top:458.42px;font-size:14.67px;line-height:17px;height:17px;"><b>Bailén 20; 3º - 1ª&nbsp;&nbsp;</b></div>
<div class="dt" style="left:397.5px;top:475.42px;font-size:14.67px;line-height:17px;height:17px;"><b>08010 Barcelona</b></div>
<div class="dt" style="left:169.4px;top:493.42px;font-size:14.67px;line-height:17px;height:17px;">Titulo</div>
<div class="dt" style="left:169.4px;top:511.42px;font-size:14.67px;line-height:17px;height:17px;"><i>Representante</i></div>
<div class="dt" style="left:169.4px;top:529.42px;font-size:14.67px;line-height:17px;height:17px;">Nombre</div>
<div class="dt" style="left:169.4px;top:547.42px;font-size:14.67px;line-height:17px;height:17px;">Apellidos</div>
<div class="dt" style="left:169.4px;top:564.42px;font-size:14.67px;line-height:17px;height:17px;">NIF</div>
<div class="dt" style="left:169.4px;top:582.42px;font-size:14.67px;line-height:17px;height:17px;">Domicilio</div>
<div class="dt" style="left:169.4px;top:600.42px;font-size:14.67px;line-height:17px;height:17px;"><i>Titulo</i></div>
<div class="hl" style="left:162px;top:421px;width:570px;height:1px"></div>
<div class="hl" style="left:162px;top:439px;width:570px;height:1px"></div>
<div class="hl" style="left:162px;top:457px;width:570px;height:1px"></div>
<div class="hl" style="left:162px;top:491px;width:570px;height:1px"></div>
<div class="hl" style="left:162px;top:509px;width:570px;height:1px"></div>
<div class="hl" style="left:162px;top:527px;width:570px;height:1px"></div>
<div class="hl" style="left:162px;top:545px;width:570px;height:1px"></div>
<div class="hl" style="left:162px;top:563px;width:570px;height:1px"></div>
<div class="hl" style="left:162px;top:581px;width:570px;height:1px"></div>
<div class="hl" style="left:162px;top:598px;width:570px;height:1px"></div>
<div class="hl" style="left:162px;top:616px;width:570px;height:1px"></div>
<div class="hl" style="left:162px;top:421px;width:1px;height:196px"></div>
<div class="hl" style="left:731px;top:421px;width:1px;height:196px"></div>
<div class="hl" style="left:390px;top:421px;width:1px;height:18px"></div>
<div class="hl" style="left:390px;top:439px;width:1px;height:18px"></div>
<div class="hl" style="left:390px;top:457px;width:1px;height:34px"></div>
<div class="hl" style="left:390px;top:491px;width:1px;height:18px"></div>
<div class="hl" style="left:390px;top:527px;width:1px;height:18px"></div>
<div class="hl" style="left:390px;top:545px;width:1px;height:18px"></div>
<div class="hl" style="left:390px;top:563px;width:1px;height:18px"></div>
<div class="hl" style="left:390px;top:581px;width:1px;height:17px"></div>
<div class="hl" style="left:390px;top:598px;width:1px;height:18px"></div>
<div class="dt" style="left:169.4px;top:633.38px;font-size:13.33px;line-height:16px;height:16px;font-weight:bold;">DATOS DEL ARRENDATARIO</div>
<div class="dt" style="left:169.4px;top:650.42px;font-size:14.67px;line-height:17px;height:17px;">Nombre completo o razón social</div>
<div class="dt" style="left:397.5px;top:650.42px;font-size:14.67px;line-height:17px;height:17px;"><b>Nombre completo inquilino</b></div>
<div class="dt" style="left:169.4px;top:668.42px;font-size:14.67px;line-height:17px;height:17px;">NIF</div>
<div class="dt" style="left:397.5px;top:668.42px;font-size:14.67px;line-height:17px;height:17px;"><b>02068949F</b></div>
<div class="dt" style="left:169.4px;top:685.42px;font-size:14.67px;line-height:17px;height:17px;">Domicilio</div>
<div class="dt" style="left:397.5px;top:685.42px;font-size:14.67px;line-height:17px;height:17px;"><b>Valencia 220; 1º - 1ª&nbsp;&nbsp;</b></div>
<div class="dt" style="left:397.5px;top:702.42px;font-size:14.67px;line-height:17px;height:17px;"><b>08004 Barcelona</b></div>
<div class="hl" style="left:162px;top:648px;width:570px;height:1px"></div>
<div class="hl" style="left:162px;top:666px;width:570px;height:1px"></div>
<div class="hl" style="left:162px;top:684px;width:570px;height:1px"></div>
<div class="hl" style="left:162px;top:718px;width:570px;height:1px"></div>
<div class="hl" style="left:162px;top:648px;width:1px;height:71px"></div>
<div class="hl" style="left:731px;top:648px;width:1px;height:71px"></div>
<div class="hl" style="left:390px;top:648px;width:1px;height:18px"></div>
<div class="hl" style="left:390px;top:666px;width:1px;height:18px"></div>
<div class="hl" style="left:390px;top:684px;width:1px;height:34px"></div>
<div class="sq" style="left:398px;top:317px;width:63px"></div>
<div class="sq" style="left:170px;top:369px;width:47px"></div>
<div class="sq" style="left:328px;top:369px;width:30px"></div>
<div class="sq" style="left:398px;top:473px;width:43px"></div>

<!-- RIGHT PANEL -->
<div class="a" style="left:1227px;top:141px;width:1px;height:580px;background:#9a9fa8"></div>
<div class="a" style="left:880px;top:146px;width:345px;height:519px;border:1px solid #a4a8b0;background:#fff"></div>
<div class="a" style="left:881px;top:147px;width:343px;height:22px;background:#e9ebef"></div><div class="a" style="left:882px;top:148px;width:341px;height:20px;background:linear-gradient(#d0d4dc,#ccd1d9)"></div>
<div class="a" style="left:882px;top:169px;width:341px;height:495px;border:1px solid #a4a8b0;background:#fff"></div>
<div class="t" style="transform:scaleX(0.9425);left:885.500px;top:151px;color:#36415c">Lista de Campos</div>
<div class="a" style="left:1171px;top:154px;width:9px;height:7px;border:2px solid #5a5f6b"></div>
<svg class="a" style="left:1190px;top:153px" width="9" height="9" viewBox="0 0 9 9" fill="#5a5f6b"><path d="M2.300 0H7.200V5H8V6H5.200V9H4.200V6H1V5H2.300ZM3.300 1V5H5.400V1Z"/></svg>
<svg class="a" style="left:1208.500px;top:154px" width="10" height="7" viewBox="0 0 10 7"><path d="M1.300 0.500L8.700 6.500M8.700 0.500L1.300 6.500" stroke="#5a5f6b" stroke-width="2.300" fill="none"/></svg>
<div class="a" style="left:1205px;top:170px;width:17px;height:493px;background:linear-gradient(90deg,#e9eaed,#f4f5f6 50%,#f8f8f9)"></div>
<div class="a" style="left:1208.500px;top:176px;width:0;height:0;border-left:5px solid transparent;border-right:5px solid transparent;border-bottom:5px solid #5b5f68"></div>
<div class="a" style="left:1208.500px;top:652px;width:0;height:0;border-left:5px solid transparent;border-right:5px solid transparent;border-top:5px solid #5b5f68"></div>
<div class="a" style="left:1206px;top:337px;width:15px;height:308px;border:1px solid #b7bac2;border-radius:2px;background:linear-gradient(90deg,#f3f4f5,#e6e8eb)"></div>
<div class="a" style="left:1210px;top:488px;width:7px;height:1px;background:#62666e"></div>
<div class="a" style="left:1210px;top:490px;width:7px;height:1px;background:#62666e"></div>
<div class="a" style="left:1210px;top:492px;width:7px;height:1px;background:#62666e"></div>
<div class="a" style="left:1210px;top:494px;width:7px;height:1px;background:#62666e"></div>
<div class="fi" style="top:172px;font-size:8px;letter-spacing:-1.200px;text-indent:-1px">1,2</div>
<div class="tr" style="transform:scaleX(0.9113);top:172.3px">CONTRATO_IMPORTE_RECIBO</div>
<div class="fi" style="top:190px">ab</div>
<div class="tr" style="transform:scaleX(0.8999);top:190.3px">CONTRATO_MES</div>
<div class="yh" style="left:933px;top:206.2px;width:114.0px;height:17.6px"></div>
<div class="fi y" style="top:208px">ab</div>
<div class="tr" style="transform:scaleX(0.8968);top:208.3px">DEPARTAMENTO</div>
<div class="fi" style="top:226px">ab</div>
<div class="tr" style="transform:scaleX(0.9132);top:226.3px">DEPARTAMENTO_CEDULA_HABITABILIDAD</div>
<div class="fi" style="top:244px">ab</div>
<div class="tr" style="transform:scaleX(0.9053);top:244.3px">DEPARTAMENTO_CERTIFICADO_ENERGETICO</div>
<div class="fi" style="top:262px">ab</div>
<div class="tr" style="transform:scaleX(0.8998);top:262.3px">DEPARTAMENTO_COD_POSTAL</div>
<div class="yh" style="left:933px;top:279.2px;width:172.2px;height:14.4px"></div>
<div class="fi y" style="top:280px">ab</div>
<div class="tr" style="transform:scaleX(0.9105);top:280.3px">DEPARTAMENTO_DIRECCION</div>
<div class="fi" style="top:298px">ab</div>
<div class="tr" style="transform:scaleX(0.9055);top:298.3px">DEPARTAMENTO_DIRECCION_COMPLETA</div>
<div class="fi" style="top:316px">ab</div>
<div class="tr" style="transform:scaleX(0.9028);top:316.3px">DEPARTAMENTO_POBLACION</div>
<div class="fi" style="top:334px">ab</div>
<div class="tr" style="transform:scaleX(0.9099);top:334.3px">DEPARTAMENTO_PROVINCIA</div>
<div class="fi" style="top:352px">ab</div>
<div class="tr" style="transform:scaleX(0.9028);top:352.3px">DEPARTAMENTO_REFERENCIA_CATASTRAL</div>
<div class="fi" style="top:370px">ab</div>
<div class="tr" style="transform:scaleX(0.8860);top:370.3px">FECHA_ACTUAL</div>
<div class="fi" style="top:388px">12</div>
<div class="tr" style="transform:scaleX(0.9186);top:388.3px">ID_CONTRATO_ALQUILER</div>
<div class="fi" style="top:406px">ab</div>
<div class="tr" style="transform:scaleX(0.9472);top:406.3px">INQUILINO_PRINCIPAL_DOMICILIO</div>
<div class="fi" style="top:424px">ab</div>
<div class="tr" style="transform:scaleX(0.9386);top:424.3px">INQUILINO_PRINCIPAL_DOMICILIO_EN_LINEA</div>
<div class="yh" style="left:934px;top:440.3px;width:178.0px;height:14.7px"></div>
<div class="fi y" style="top:442px">ab</div>
<div class="tr" style="transform:scaleX(0.9324);top:442.3px">INQUILINO_PRINCIPAL_EMAIL</div>
<div class="fi" style="top:460px">ab</div>
<div class="tr" style="transform:scaleX(0.9446);top:460.3px">INQUILINO_PRINCIPAL_NIF</div>
<div class="fi" style="top:478px">ab</div>
<div class="tr" style="transform:scaleX(0.9223);top:478.3px">INQUILINO_PRINCIPAL_NOMBRE</div>
<div class="yh" style="left:933px;top:493.3px;width:200.2px;height:16.5px"></div>
<div class="fi y" style="top:496px">ab</div>
<div class="tr" style="transform:scaleX(0.9199);top:496.3px">INQUILINO_PRINCIPAL_TELEFONO</div>
<div class="fi" style="top:514px">ab</div>
<div class="tr" style="transform:scaleX(0.9276);top:514.3px">SEGUNDO_INQUILINO_DOMICILIO</div>
<div class="fi" style="top:532px">ab</div>
<div class="tr" style="transform:scaleX(0.9238);top:532.3px">SEGUNDO_INQUILINO_DOMICILIO_EN_LINEA</div>
<div class="yh" style="left:934px;top:549.2px;width:170.0px;height:16.3px"></div>
<div class="fi y" style="top:550px">ab</div>
<div class="tr" style="transform:scaleX(0.9103);top:550.3px">SEGUNDO_INQUILINO_EMAIL</div>
<div class="fi" style="top:568px">ab</div>
<div class="tr" style="transform:scaleX(0.9209);top:568.3px">SEGUNDO_INQUILINO_NIF</div>
<div class="fi" style="top:586px">ab</div>
<div class="tr" style="transform:scaleX(0.9033);top:586.3px">SEGUNDO_INQUILINO_NOMBRE</div>
<div class="yh" style="left:936px;top:601.2px;width:190.0px;height:17.8px"></div>
<div class="fi y" style="top:604px">ab</div>
<div class="tr" style="transform:scaleX(0.9020);top:604.3px">SEGUNDO_INQUILINO_TELEFONO</div>
<div class="fi" style="top:622px">ab</div>
<div class="tr" style="transform:scaleX(0.9150);top:622.3px">USUARIO_ASIGNADO</div>
<div class="fi" style="left:902px;top:640px;border-top-color:#ff9a1f">?</div>
<div class="tr" style="transform:scaleX(0.9673);left:922.500px;top:639.700px">Parameters</div>
<div class="a" style="left:880px;top:670px;width:345px;height:60px;border:1px solid #a4a8b0;background:#e5e8ed"></div>
<div class="a" style="left:882px;top:693px;width:341px;height:40px;border:1px solid #a4a8b0;background:#fff"></div>
<div class="t" style="transform:scaleX(0.9742);left:885.500px;top:674.700px;color:#6a7186">Explorador de informes</div>
<div class="a" style="left:1171px;top:678px;width:9px;height:7px;border:2px solid #5a5f6b"></div>
<svg class="a" style="left:1190px;top:677px" width="9" height="9" viewBox="0 0 9 9" fill="#5a5f6b"><path d="M2.300 0H7.200V5H8V6H5.200V9H4.200V6H1V5H2.300ZM3.300 1V5H5.400V1Z"/></svg>
<svg class="a" style="left:1208.500px;top:678px" width="10" height="7" viewBox="0 0 10 7"><path d="M1.300 0.500L8.700 6.500M8.700 0.500L1.300 6.500" stroke="#5a5f6b" stroke-width="2.300" fill="none"/></svg>

</body></html>
